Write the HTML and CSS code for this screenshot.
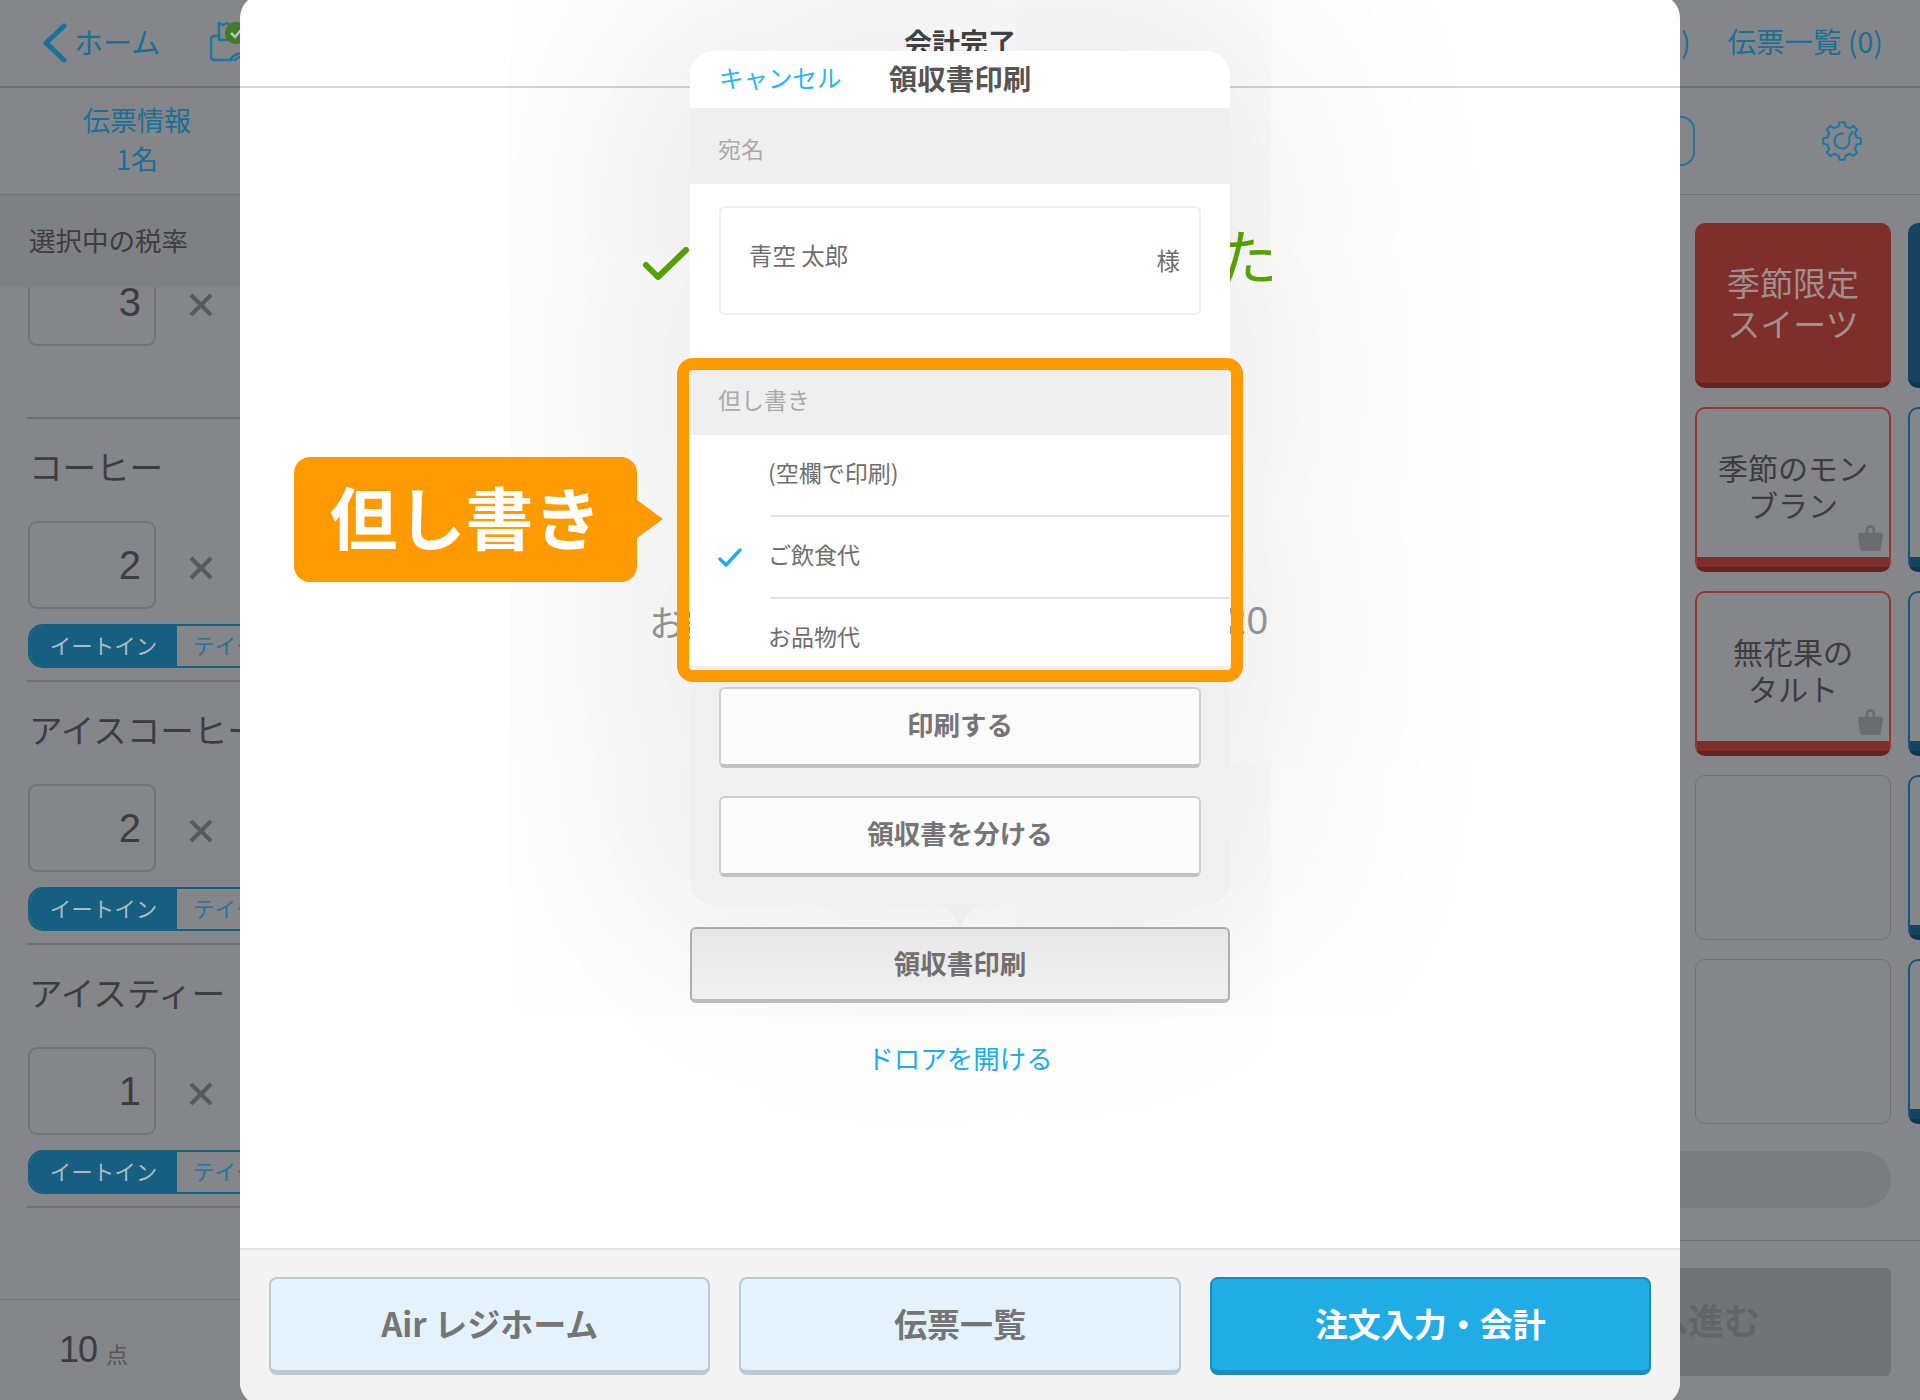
FILE: index.html
```html
<!DOCTYPE html>
<html lang="ja">
<head>
<meta charset="utf-8">
<title>会計完了 領収書印刷</title>
<link rel="stylesheet" href="styles.css">
</head>
<body>
<div class="app">
  <header class="topbar">
    <div class="top-left">
      <svg class="chevron" viewBox="0 0 24 40"><polyline points="21,3 3,20 21,37"/></svg>
      <span class="home">ホーム</span>
      <svg class="printer" viewBox="0 0 50 44">
        <path class="p-line" d="M9 16 H4 a3 3 0 0 0 -3 3 V37 a3 3 0 0 0 3 3 H22"/>
        <path class="p-line" d="M9 20 V3 L13 5 L17 3 L21 5 L25 3 V20 H9"/>
        <path class="p-line" d="M20 40 a14 14 0 0 1 18 -5 M25 40 a8 8 0 0 1 10 -2"/>
        <circle class="p-badge" cx="26" cy="13" r="11"/>
        <polyline class="p-check" points="21,13 25,17 31,10"/>
      </svg>
    </div>
    <div class="top-right">
      <span>注文履歴 (0)</span>
      <span>伝票一覧 (0)</span>
    </div>
  </header>
  <div class="subbar">
    <div class="slip">伝票情報<br>1名</div>
    <div class="sub-btn"></div>
    <svg class="gear" viewBox="-21 -21 42 42">
      <defs><path id="tooth" d="M-5.74 -13.86 L-3.37 -14.6 L-2.64 -18.8 L2.64 -18.8 L3.37 -14.6 L5.74 -13.86"/></defs>
      <use href="#tooth"/><use href="#tooth" transform="rotate(45)"/><use href="#tooth" transform="rotate(90)"/><use href="#tooth" transform="rotate(135)"/>
      <use href="#tooth" transform="rotate(180)"/><use href="#tooth" transform="rotate(225)"/><use href="#tooth" transform="rotate(270)"/><use href="#tooth" transform="rotate(315)"/>
      <path d="M7 -3 A7.5 7.5 0 1 1 1 -7.5 M7 -3 L10 -9"/>
    </svg>
  </div>
  <main class="main">
    <section class="left">
      <div class="tax">選択中の税率</div>
      <div class="list">
        <article class="item first">
          <div class="qty-row">
            <div class="qty">3</div>
            <svg class="times" viewBox="0 0 24 24"><path d="M2 2 L22 22 M22 2 L2 22"/></svg>
          </div>
        </article>
        <article class="item">
          <div class="name">コーヒー</div>
          <div class="qty-row">
            <div class="qty">2</div>
            <svg class="times" viewBox="0 0 24 24"><path d="M2 2 L22 22 M22 2 L2 22"/></svg>
          </div>
          <div class="seg"><span class="seg-on">イートイン</span><span class="seg-off">テイクアウト</span></div>
        </article>
        <article class="item">
          <div class="name">アイスコーヒー</div>
          <div class="qty-row">
            <div class="qty">2</div>
            <svg class="times" viewBox="0 0 24 24"><path d="M2 2 L22 22 M22 2 L2 22"/></svg>
          </div>
          <div class="seg"><span class="seg-on">イートイン</span><span class="seg-off">テイクアウト</span></div>
        </article>
        <article class="item">
          <div class="name">アイスティー</div>
          <div class="qty-row">
            <div class="qty">1</div>
            <svg class="times" viewBox="0 0 24 24"><path d="M2 2 L22 22 M22 2 L2 22"/></svg>
          </div>
          <div class="seg"><span class="seg-on">イートイン</span><span class="seg-off">テイクアウト</span></div>
        </article>
      </div>
      <div class="total"><span class="total-num">10</span><span class="total-unit">点</span></div>
    </section>
    <section class="right">
      <div class="tiles">
        <div class="tile solid-red">季節限定<br>スイーツ</div>
        <div class="tile solid-blue"></div>
        <div class="tile line-red">
          <div class="tile-body">季節のモン<br>ブラン</div><div class="tile-bar"></div>
          <svg class="bag" viewBox="0 0 28 28"><path d="M9 9 V6 a5 5 0 0 1 10 0 V9 H25 a2 2 0 0 1 2 2 L25 25 a3 3 0 0 1 -3 3 H6 a3 3 0 0 1 -3 -3 L1 11 a2 2 0 0 1 2 -2 Z M12 9 H16 V6 a2 2 0 0 0 -4 0 Z"/></svg>
        </div>
        <div class="tile line-blue"><div class="tile-body"></div><div class="tile-bar"></div></div>
        <div class="tile line-red">
          <div class="tile-body">無花果の<br>タルト</div><div class="tile-bar"></div>
          <svg class="bag" viewBox="0 0 28 28"><path d="M9 9 V6 a5 5 0 0 1 10 0 V9 H25 a2 2 0 0 1 2 2 L25 25 a3 3 0 0 1 -3 3 H6 a3 3 0 0 1 -3 -3 L1 11 a2 2 0 0 1 2 -2 Z M12 9 H16 V6 a2 2 0 0 0 -4 0 Z"/></svg>
        </div>
        <div class="tile line-blue"><div class="tile-body"></div><div class="tile-bar"></div></div>
        <div class="tile empty"></div>
        <div class="tile line-blue"><div class="tile-body"></div><div class="tile-bar"></div></div>
        <div class="tile empty"></div>
        <div class="tile line-blue"><div class="tile-body"></div><div class="tile-bar"></div></div>
      </div>
      <div class="pill"></div>
      <div class="next-wrap"><div class="next">会計へ進む</div></div>
    </section>
  </main>
</div>

<div class="modal">
  <div class="modal-head">会計完了</div>
  <div class="modal-body">
    <div class="status">
      <svg class="status-check" viewBox="0 0 46 34"><polyline points="3,18 15,30 43,3"/></svg>
      <span>会計が完了しました</span>
    </div>
    <div class="amount"><span>お釣り</span><span class="amount-val">¥1,320</span></div>
  </div>
  <div class="modal-foot">
    <button class="foot-btn">Air レジホーム</button>
    <button class="foot-btn">伝票一覧</button>
    <button class="foot-btn primary">注文入力・会計</button>
  </div>

  <div class="popover">
    <div class="pop-head">
      <span class="pop-cancel">キャンセル</span>
      <span class="pop-title">領収書印刷</span>
    </div>
    <div class="pop-section s-name">宛名</div>
    <div class="pop-input-wrap">
      <div class="pop-input"><span class="in-name">青空 太郎</span><span class="in-suffix">様</span></div>
    </div>
    <div class="pop-section s-memo">但し書き</div>
    <div class="rows">
      <div class="row"><span class="row-check"></span><span class="row-text">(空欄で印刷)</span></div>
      <div class="row"><span class="row-check">
        <svg viewBox="0 0 24 20"><polyline points="2,11 8,17 22,2"/></svg></span><span class="row-text">ご飲食代</span></div>
      <div class="row"><span class="row-check"></span><span class="row-text">お品物代</span></div>
    </div>
    <div class="pop-actions">
      <div class="pop-btn">印刷する</div>
      <div class="pop-btn">領収書を分ける</div>
    </div>
    <svg class="pop-arrow" viewBox="0 0 56 22"><path d="M0 0 C12 0 16 3 20 9 L28 22 L36 9 C40 3 44 0 56 0 Z"/></svg>
  </div>
  <div class="receipt-btn">領収書印刷</div>
  <div class="drawer">ドロアを開ける</div>
</div>

<div class="frame"></div>
<div class="callout">但し書き</div>
</body>
</html>
```
FILE: styles.css
```css
* { box-sizing: border-box; }
html, body { margin: 0; padding: 0; }
body {
  position: relative;
  width: 1920px;
  height: 1400px;
  overflow: hidden;
  background: #85868a;
  font-family: "Noto Sans CJK JP", "Liberation Sans", sans-serif;
  font-weight: 400;
  color: #3c3d41;
}
.app { display: flex; flex-direction: column; height: 1400px; }

/* top bar */
.topbar {
  height: 88px;
  flex: none;
  border-bottom: 2px solid #707175;
  display: flex;
  justify-content: space-between;
  align-items: center;
  color: #1a7096;
  font-size: 29px;
  line-height: 36px;
}
.top-left { display: flex; align-items: center; padding-left: 43px; }
.chevron { width: 24px; height: 40px; fill: none; stroke: #1a7199; stroke-width: 5; stroke-linecap: round; stroke-linejoin: round; }
.home { margin: 0 0 4px 7px; }
.printer { width: 50px; height: 44px; margin-left: 50px; margin-top: -2px; }
.p-line { fill: none; stroke: #1f779f; stroke-width: 2.5; stroke-linejoin: round; stroke-linecap: round; }
.p-badge { fill: #3f7d27; }
.p-check { fill: none; stroke: #b9c4b2; stroke-width: 2.5; }
.top-right { display: flex; gap: 37px; padding-right: 37px; margin-bottom: 4px; font-size: 28.5px; }

.subbar {
  height: 107px;
  flex: none;
  border-bottom: 1px solid #707175;
  display: flex;
  align-items: center;
  padding-right: 57px;
}
.slip { width: 274px; margin-bottom: 4px; text-align: center; color: #1a7096; font-size: 27px; line-height: 39px; }
.sub-btn { width: 200px; height: 50px; margin-left: auto; border: 2px solid #1f779f; border-radius: 14px; }
.gear { width: 42px; height: 42px; margin-left: 126px; fill: none; stroke: #1f779f; stroke-width: 2; stroke-linecap: round; stroke-linejoin: round; }

.main { flex: 1; display: flex; justify-content: space-between; min-height: 0; }

/* left */
.left { width: 600px; display: flex; flex-direction: column; }
.tax {
  height: 92px;
  flex: none;
  background: #7f8084;
  padding: 0 0 4px 29px;
  display: flex;
  align-items: center;
  font-size: 26.5px;
  position: relative;
}
.list { flex: 1; min-height: 0; overflow: hidden; }
.item { margin-left: 27px; border-bottom: 2px solid #6f7074; padding-bottom: 12px; }
.item.first { margin-top: -29px; padding-bottom: 71px; }
.name { height: 102px; padding: 0 0 8px 2px; display: flex; align-items: center; font-size: 33.5px; line-height: 40px; white-space: nowrap; }
.qty-row { display: flex; align-items: center; }
.qty {
  width: 128px;
  height: 88px;
  margin-left: 1px;
  border: 2px solid #727377;
  border-radius: 9px;
  display: flex;
  align-items: center;
  justify-content: flex-end;
  padding-right: 13px;
  font-family: "Liberation Sans", sans-serif;
  font-weight: 400;
  font-size: 40px;
}
.times { width: 24px; height: 24px; margin: 6px 0 0 33px; fill: none; stroke: #58595c; stroke-width: 4; }
.seg {
  display: flex;
  height: 44px;
  width: 420px;
  margin: 15px 0 0 1px;
  font-size: 21.5px;
  line-height: 28px;
  border: 2px solid #165f80;
  border-radius: 15px;
  overflow: hidden;
}
.seg-on { width: 147px; flex: none; background: #165f80; color: #aeb9c0; display: flex; align-items: center; justify-content: center; padding-bottom: 2px; }
.seg-off { flex: 1; color: #27759b; display: flex; align-items: center; padding: 0 0 2px 16px; white-space: nowrap; }
.total {
  height: 101px;
  flex: none;
  border-top: 1px solid #707175;
  padding: 0 0 0 59px;
  display: flex;
  align-items: center;
}
.total-num { font-family: "Liberation Sans", sans-serif; font-weight: 400; font-size: 36px; letter-spacing: -1px; }
.total-unit { font-size: 22px; margin: 6px 0 0 9px; color: #55565a; }

/* right */
.right { width: 420px; display: flex; flex-direction: column; }
.tiles {
  margin: 28px 0 0 195px;
  display: grid;
  grid-template-columns: 196px 196px;
  grid-auto-rows: 165px;
  column-gap: 17px;
  row-gap: 19px;
}
.tile {
  position: relative;
  display: flex;
  flex-direction: column;
  align-items: stretch;
  justify-content: center;
  text-align: center;
  font-size: 30px;
  line-height: 37px;
  border-radius: 10px;
  white-space: nowrap;
}
.solid-red { background: #7e2f2b; color: #a08f8d; border-bottom: 5px solid #652420; padding-bottom: 1px; font-size: 33px; line-height: 41px; }
.solid-blue { background: #17435f; border-bottom: 5px solid #123650; }
.line-red { border: 2px solid #8f3a35; border-bottom: 5px solid #652420; }
.line-blue { border: 2px solid #17577e; border-bottom: 5px solid #123650; }
.tile-body { flex: 1; display: flex; align-items: center; justify-content: center; padding-top: 6px; }
.line-red .tile-bar { height: 10px; background: #7e2f2b; }
.line-blue .tile-bar { height: 10px; background: #17435f; }
.empty { border: 1px solid #707175; }
.bag { position: absolute; right: 5px; bottom: 16px; width: 27px; height: 27px; fill: #6c6d71; fill-rule: evenodd; }
.pill { height: 57px; margin: 27px 29px 0 0; background: #7b7c80; border-radius: 0 29px 29px 0; flex: none; }
.next-wrap { border-top: 1px solid #707175; margin-top: 32px; padding: 27px 29px 0 0; }
.next {
  height: 108px;
  background: #727377;
  border-radius: 0 6px 6px 0;
  display: flex;
  align-items: center;
  justify-content: flex-end;
  padding-right: 131px;
  padding-bottom: 6px;
  color: #636468;
  font-size: 36px;
  font-weight: 700;
  white-space: nowrap;
}

/* modal */
.modal {
  position: absolute;
  left: 240px;
  top: -6px;
  width: 1440px;
  height: 1412px;
  background: #fff;
  border-radius: 24px;
  overflow: hidden;
  display: flex;
  flex-direction: column;
}
.modal-head {
  height: 94px;
  flex: none;
  border-bottom: 2px solid #d4d4d4;
  display: flex;
  justify-content: center;
  padding-top: 28px;
  font-size: 28px;
  line-height: 40px;
  font-weight: 700;
  color: #444;
}
.modal-body { flex: 1; }
.status {
  margin-top: 134px;
  height: 64px;
  display: flex;
  justify-content: center;
  align-items: center;
  gap: 49px;
  font-size: 60px;
  line-height: 64px;
  color: #5aa800;
  white-space: nowrap;
}
.status-check { width: 46px; height: 34px; margin-top: 19px; fill: none; stroke: #5aa800; stroke-width: 6; stroke-linecap: round; stroke-linejoin: round; }
.amount {
  margin: 310px 0 0 409px;
  width: 620px;
  height: 50px;
  display: flex;
  justify-content: space-between;
  align-items: center;
  font-size: 36px;
  line-height: 50px;
  color: #999;
}
.amount-val { font-family: "Liberation Sans", sans-serif; font-weight: 400; font-size: 38px; letter-spacing: 1px; }
.modal-foot {
  height: 158px;
  flex: none;
  background: #f3f3f3;
  border-top: 2px solid #e2e2e2;
  padding: 27px 29px 0;
  display: grid;
  grid-template-columns: 1fr 1fr 1fr;
  grid-template-rows: 98px;
  column-gap: 29px;
}
.foot-btn {
  font-family: inherit;
  font-size: 33px;
  line-height: 44px;
  font-weight: 700;
  color: #757575;
  background: #e3f2fd;
  border: 2px solid #bcc8d2;
  border-bottom-width: 5px;
  border-radius: 8px;
  padding: 0 0 3px;
}
.foot-btn.primary { background: #20ade6; color: #fff; border-color: #1a8cbc; }

/* popover */
.popover {
  position: absolute;
  left: 450px;
  top: 57px;
  width: 540px;
  background: #fff;
  border-radius: 24px;
  box-shadow: 0 0 260px 20px rgba(0, 0, 0, .13);
}
.pop-head {
  height: 57px;
  display: grid;
  grid-template-columns: 1fr auto 1fr;
  align-items: center;
  padding: 0 29px 4px;
}
.pop-cancel { color: #2eb5ea; font-size: 24.5px; line-height: 30px; font-weight: 400; }
.pop-title { color: #555; font-size: 28.5px; line-height: 36px; font-weight: 700; }
.pop-section {
  background: #efefef;
  color: #aaa;
  font-size: 23px;
  line-height: 30px;
  padding-left: 28px;
  display: flex;
  align-items: center;
}
.s-name { height: 76px; padding-top: 4px; }
.s-memo { height: 65px; padding-bottom: 7px; }
.pop-input-wrap { padding: 22px 29px 55px; }
.pop-input {
  height: 109px;
  border: 2px solid #efefef;
  border-radius: 6px;
  display: flex;
  justify-content: space-between;
  align-items: center;
  padding: 0 19px 0 28px;
  color: #6e6e6e;
  font-size: 23.5px;
  line-height: 30px;
}
.in-name { margin-bottom: 12px; }
.in-suffix { margin-bottom: 2px; }
.rows { height: 231px; overflow: hidden; }
.row { height: 82px; display: flex; align-items: center; padding-left: 28px; }
.row-check { width: 52px; flex: none; display: flex; align-items: center; }
.row-check svg { width: 24px; height: 20px; fill: none; stroke: #22ade6; stroke-width: 3.5; stroke-linecap: round; stroke-linejoin: round; }
.row-text {
  flex: 1;
  height: 82px;
  border-bottom: 2px solid #e2e2e2;
  line-height: 75px;
  text-indent: -2px;
  color: #6e6e6e;
  font-size: 23px;
}
.pop-actions {
  background: #f0f0f0;
  border-radius: 0 0 24px 24px;
  border-top: 4px solid #efefef;
  padding: 17px 29px 28px;
  display: flex;
  flex-direction: column;
  gap: 28px;
}
.pop-btn {
  height: 81px;
  background: #fbfbfb;
  border: 2px solid #cfcfcf;
  border-bottom: 4px solid #c2c2c2;
  border-radius: 6px;
  display: flex;
  align-items: center;
  justify-content: center;
  padding-bottom: 6px;
  color: #757575;
  font-size: 26.5px;
  font-weight: 700;
}
.pop-arrow { position: absolute; left: 242px; top: 100%; width: 56px; height: 22px; fill: #ededed; }
.receipt-btn {
  position: absolute;
  left: 450px;
  top: 933px;
  width: 540px;
  height: 76px;
  background: linear-gradient(#e7e7e7, #f0f0f0);
  border: 2px solid #adadad;
  border-bottom: 4px solid #bcbcbc;
  border-radius: 6px;
  display: flex;
  align-items: center;
  justify-content: center;
  padding-bottom: 4px;
  color: #707070;
  font-size: 26.5px;
  font-weight: 700;
}
.drawer {
  position: absolute;
  left: 450px;
  top: 1046px;
  width: 540px;
  text-align: center;
  color: #22ade6;
  font-size: 26.5px;
  line-height: 36px;
}

/* annotation */
.frame {
  position: absolute;
  left: 677px;
  top: 358px;
  width: 566px;
  height: 324px;
  border: 12px solid #ff9a00;
  border-radius: 16px;
}
.callout {
  position: absolute;
  left: 294px;
  top: 457px;
  width: 343px;
  height: 125px;
  padding-bottom: 7px;
  background: #ff9a00;
  border-radius: 16px;
  display: flex;
  align-items: center;
  justify-content: center;
  color: #fff;
  font-size: 68px;
  line-height: 80px;
  font-weight: 700;
  white-space: nowrap;
}
.callout::after {
  content: "";
  position: absolute;
  left: 100%;
  top: 43px;
  width: 26px;
  height: 38px;
  background: #ff9a00;
  clip-path: polygon(0 0, 100% 50%, 0 100%);
}
```
